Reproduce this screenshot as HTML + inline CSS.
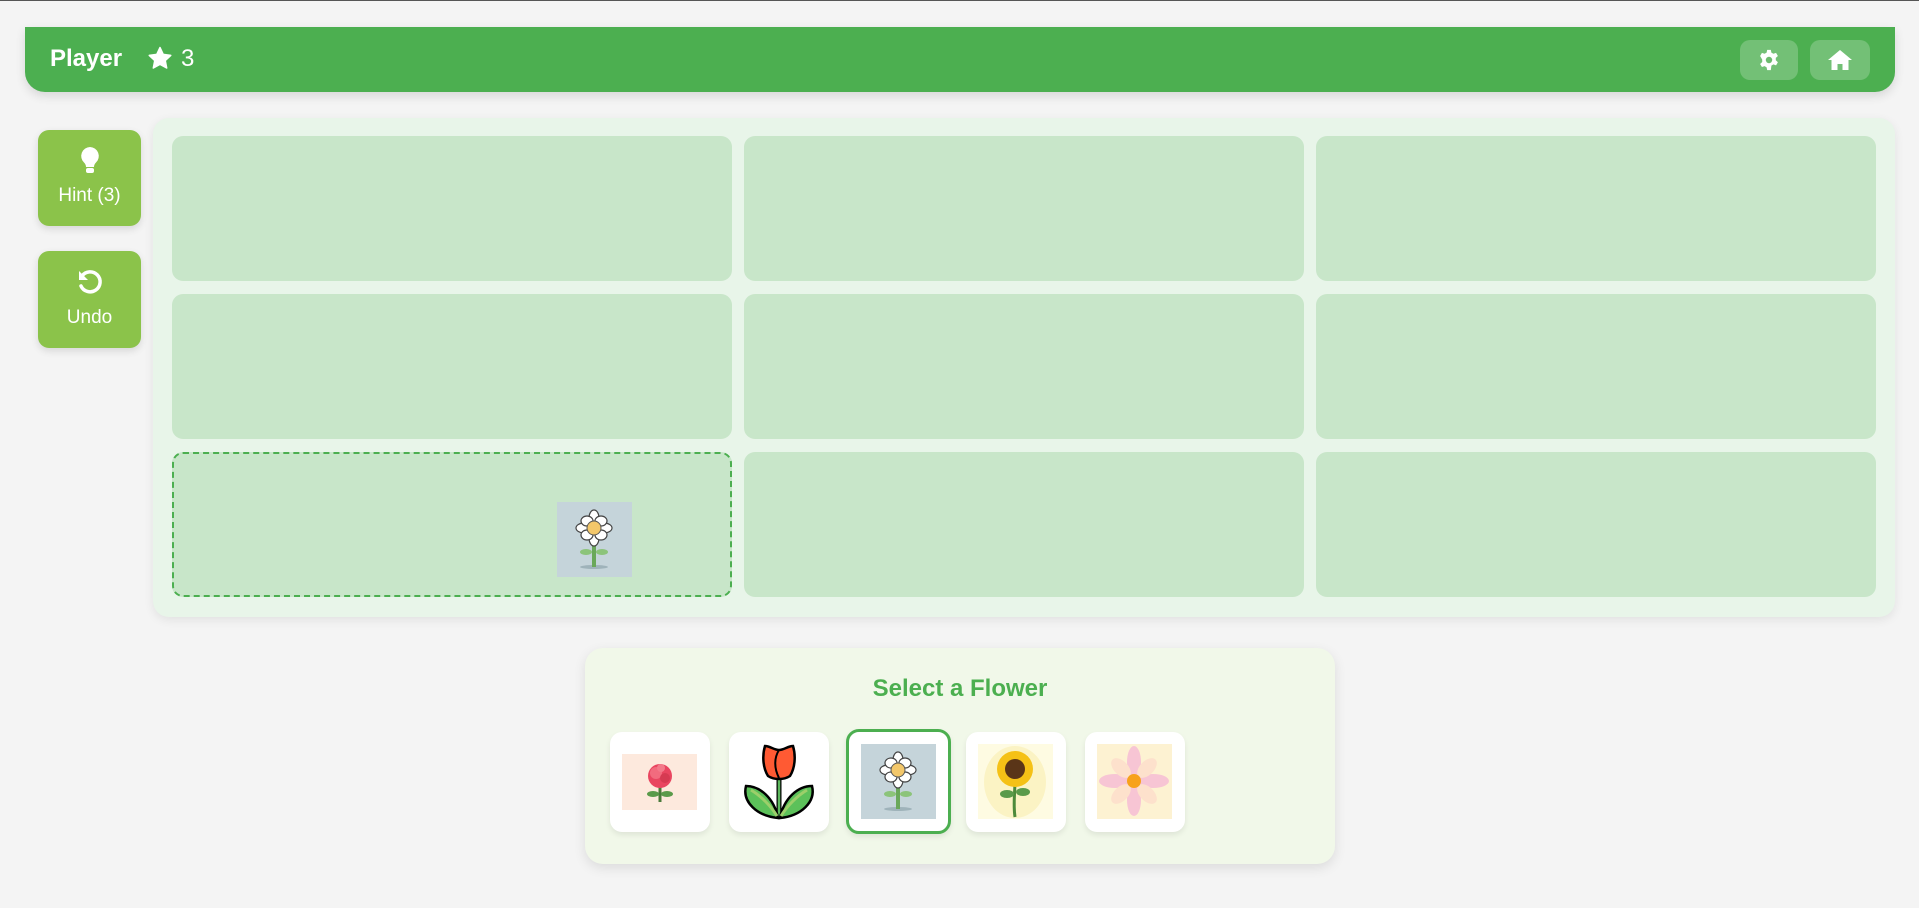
<!DOCTYPE html>
<html><head><meta charset="utf-8">
<style>
*{box-sizing:border-box;margin:0;padding:0}
body{width:1919px;height:908px;background:#f4f4f4;font-family:"Liberation Sans",sans-serif;position:relative;overflow:hidden;border-top:1px solid #555}
.hdr{position:absolute;left:25px;top:26px;width:1870px;height:65px;background:#4caf50;border-radius:0 0 20px 20px;box-shadow:0 4px 10px rgba(0,0,0,.12)}
.hdr .name{position:absolute;left:25px;top:18px;color:#fff;font-weight:bold;font-size:24px}
.hdr .star{position:absolute;left:122px;top:19px}
.hdr .sc{position:absolute;left:156px;top:18px;color:#fff;font-size:24px}
.hb{position:absolute;top:13px;height:40px;background:rgba(255,255,255,.22);border-radius:10px}
.sb{position:absolute;left:38px;width:103px;background:#8bc34a;border-radius:11px;color:#fff;font-size:19px;text-align:center;box-shadow:0 3px 8px rgba(0,0,0,.12)}
.board{position:absolute;left:153px;top:117px;width:1742px;height:499px;background:#e8f5e9;border-radius:16px;box-shadow:0 3px 10px rgba(0,0,0,.08)}
.cell{position:absolute;background:#c8e6c9;border-radius:11px}
.panel{position:absolute;left:585px;top:647px;width:750px;height:216px;background:#f1f8e9;border-radius:18px;box-shadow:0 4px 12px rgba(0,0,0,.1)}
.title{position:absolute;left:0;width:100%;top:27px;text-align:center;color:#4caf50;font-weight:bold;font-size:24px}
.tile{position:absolute;top:84px;width:100px;height:100px;background:#fff;border-radius:12px;box-shadow:0 3px 6px rgba(0,0,0,.08)}
.tile svg{position:absolute;left:12px;top:12px}
</style></head><body>
<svg width="0" height="0" style="position:absolute">
<defs>
<g id="daisy">
<rect width="75" height="75" fill="#c5d4da"/>
<ellipse cx="37" cy="65" rx="14" ry="2" fill="#9fb3ba"/>
<rect x="35" y="40" width="4" height="25" fill="#6aa85a"/>
<ellipse cx="29" cy="50" rx="6" ry="3" fill="#8cc47a"/>
<ellipse cx="45" cy="50" rx="6" ry="3" fill="#8cc47a"/>
<g fill="#fff" stroke="#444" stroke-width="1.2">
<ellipse cx="37" cy="16" rx="5" ry="8"/><ellipse cx="37" cy="36" rx="5" ry="8"/>
<ellipse cx="27" cy="26" rx="8" ry="5"/><ellipse cx="47" cy="26" rx="8" ry="5"/>
<ellipse cx="30" cy="19" rx="6" ry="5"/><ellipse cx="44" cy="19" rx="6" ry="5"/>
<ellipse cx="30" cy="33" rx="6" ry="5"/><ellipse cx="44" cy="33" rx="6" ry="5"/>
</g>
<circle cx="37" cy="26" r="7" fill="#f3c76a" stroke="#555" stroke-width="1"/>
</g>
</defs></svg>

<div class="hdr">
<div class="name">Player</div>
<svg class="star" width="26" height="25" viewBox="0 0 24 24"><path fill="#fff" d="M12 1.5l3.1 6.6 7.2.9-5.3 5 1.4 7.1L12 17.6l-6.4 3.5 1.4-7.1-5.3-5 7.2-.9z" stroke="#fff" stroke-linejoin="round" stroke-width="1.5"/></svg>
<div class="sc">3</div>
<div class="hb" style="left:1715px;width:58px"><svg width="22" height="22" viewBox="0 0 24 24" style="position:absolute;left:18px;top:9px"><path fill="#fff" d="M10 1h4l.6 3 2.2 1.2 2.9-1 2 3.4-2.3 2.1v2.6l2.3 2.1-2 3.4-2.9-1-2.2 1.3L14 23h-4l-.6-3-2.2-1.3-2.9 1-2-3.4 2.3-2.1v-2.6L2.3 7.6l2-3.4 2.9 1L9.4 4z"/><circle cx="12" cy="12" r="3.5" fill="#6dbb6f"/></svg></div>
<div class="hb" style="left:1785px;width:60px"><svg width="26" height="22" viewBox="0 0 26 22" style="position:absolute;left:17px;top:9px"><path fill="#fff" d="M13 1L1 11h3.5v10h6v-6h5v6h6V11H25z"/></svg></div>
</div>

<div class="sb" style="top:129px;height:96px">
<svg width="22" height="30" viewBox="0 0 22 30" style="position:absolute;left:41px;top:16px"><path fill="#fff" d="M11 1a9 9 0 0 0-6 15.5c1.3 1.4 2 2.8 2 4.5h8c0-1.7.7-3.1 2-4.5A9 9 0 0 0 11 1z"/><rect x="7" y="22" width="8" height="5" rx="2" fill="#fff"/></svg>
<div style="position:absolute;top:55px;width:100%">Hint (3)</div>
</div>
<div class="sb" style="top:250px;height:97px">
<svg width="28" height="28" viewBox="0 0 28 28" style="position:absolute;left:38px;top:17px"><path d="M6 8a10 10 0 1 1-1 10" fill="none" stroke="#fff" stroke-width="3.5" stroke-linecap="round"/><path d="M3 3v9h9z" fill="#fff"/></svg>
<div style="position:absolute;top:56px;width:100%">Undo</div>
</div>

<div class="board">
<div class="cell" style="left:19px;top:18px;width:560px;height:145px"></div>
<div class="cell" style="left:591px;top:18px;width:560px;height:145px"></div>
<div class="cell" style="left:1163px;top:18px;width:560px;height:145px"></div>
<div class="cell" style="left:19px;top:176px;width:560px;height:145px"></div>
<div class="cell" style="left:591px;top:176px;width:560px;height:145px"></div>
<div class="cell" style="left:1163px;top:176px;width:560px;height:145px"></div>
<div class="cell" style="left:19px;top:334px;width:560px;height:145px;border:2px dashed #4caf50"></div>
<div class="cell" style="left:591px;top:334px;width:560px;height:145px"></div>
<div class="cell" style="left:1163px;top:334px;width:560px;height:145px"></div>
<svg width="75" height="75" style="position:absolute;left:404px;top:384px"><use href="#daisy"/></svg>
</div>

<div class="panel">
<div class="title">Select a Flower</div>
<div class="tile" style="left:25px">
<svg width="76" height="76" viewBox="0 0 76 76"><rect x="0" y="10" width="75" height="56" fill="#fde9dd"/>
<path d="M38 40v18" stroke="#4a7a3a" stroke-width="3"/><ellipse cx="31" cy="50" rx="6" ry="3" fill="#5a9a4a"/><ellipse cx="45" cy="50" rx="6" ry="3" fill="#5a9a4a"/>
<circle cx="38" cy="32" r="12" fill="#e94560"/><circle cx="34" cy="29" r="6" fill="#f26b7e"/><circle cx="43" cy="34" r="5" fill="#d63a52"/><circle cx="39" cy="24" r="4" fill="#f37a8a"/></svg></div>
<div class="tile" style="left:144px">
<svg width="76" height="76" viewBox="0 0 76 76"><path d="M38 36v38" stroke="#000" stroke-width="5"/><path d="M38 36v38" stroke="#5cb85c" stroke-width="2.5"/>
<path d="M37 74C16 72 1 58 5 42c14 0 28 12 32 32z" fill="#5cc15a" stroke="#000" stroke-width="2.5"/>
<path d="M39 74C60 72 75 58 71 42c-14 0-28 12-32 32z" fill="#5cc15a" stroke="#000" stroke-width="2.5"/>
<path d="M10 46c10 6 20 16 26 26M66 46c-10 6-20 16-26 26" stroke="#9ccf6a" stroke-width="3" fill="none"/>
<path d="M24 2c5 0 9 4 14 4s9-4 14-4c3 10 2 22-3 30-6 4-16 4-22 0-5-8-6-20-3-30z" fill="#ff5a33" stroke="#000" stroke-width="2.5"/>
<path d="M38 6c-5 8-5 18 0 28" stroke="#000" stroke-width="2" fill="none"/></svg></div>
<div class="tile" style="left:261px;top:81px;width:105px;height:105px;border:3px solid #4caf50;border-radius:13px">
<svg width="75" height="75" style="left:12px;top:12px"><use href="#daisy"/></svg></div>
<div class="tile" style="left:381px">
<svg width="76" height="76" viewBox="0 0 76 76"><rect width="75" height="75" fill="#fefbe2"/><ellipse cx="37" cy="38" rx="31" ry="36" fill="#fbf3c4"/>
<path d="M37 35c0 15-2 25 0 38" stroke="#4d8a3a" stroke-width="3" fill="none"/><ellipse cx="29" cy="50" rx="7" ry="4" fill="#5a9a4a"/><ellipse cx="45" cy="48" rx="7" ry="4" fill="#5a9a4a"/>
<circle cx="37" cy="25" r="18" fill="#f5c116"/><circle cx="37" cy="25" r="10" fill="#5a3518"/></svg></div>
<div class="tile" style="left:500px">
<svg width="76" height="76" viewBox="0 0 76 76"><rect width="75" height="75" fill="#fdf2d2"/>
<g fill="#f7c5d4"><ellipse cx="37" cy="18" rx="7" ry="16"/><ellipse cx="37" cy="56" rx="7" ry="16"/><ellipse cx="18" cy="37" rx="16" ry="7"/><ellipse cx="56" cy="37" rx="16" ry="7"/></g>
<g fill="#fde1cc"><ellipse cx="24" cy="24" rx="12" ry="7" transform="rotate(45 24 24)"/><ellipse cx="50" cy="50" rx="12" ry="7" transform="rotate(45 50 50)"/><ellipse cx="50" cy="24" rx="12" ry="7" transform="rotate(-45 50 24)"/><ellipse cx="24" cy="50" rx="12" ry="7" transform="rotate(-45 24 50)"/></g>
<circle cx="37" cy="37" r="7" fill="#f7a21b"/></svg></div>
</div>
</body></html>
